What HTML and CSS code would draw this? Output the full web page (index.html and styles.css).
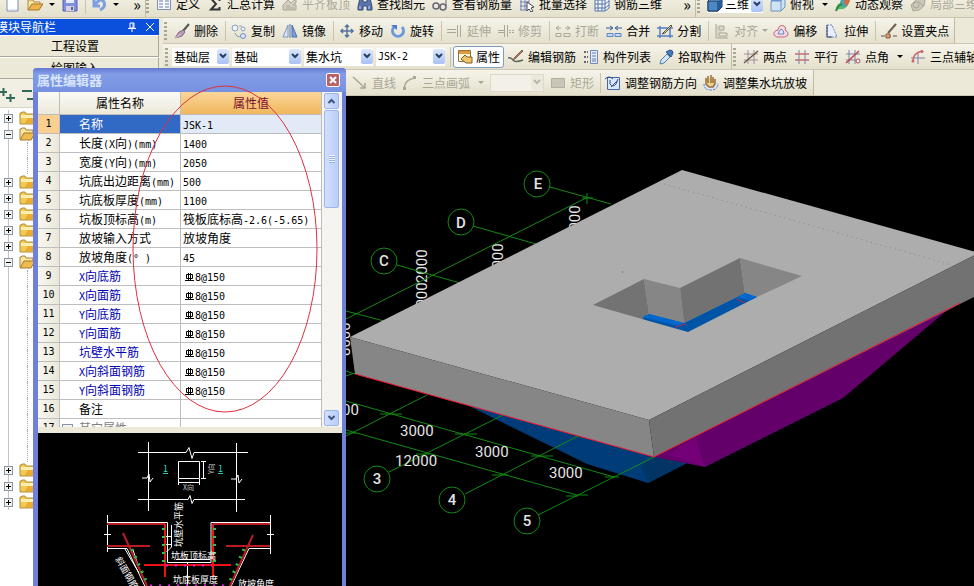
FILE: index.html
```html
<!DOCTYPE html>
<html lang="zh-CN">

<head>
    <meta charset="UTF-8">
    <meta name="viewport" content="width=device-width, initial-scale=1.0">
    <title>钢筋算量</title>
    <link rel="stylesheet" href="styles.css">
</head>

<body>
    <!-- shared symbols -->
    <svg class="symbols" aria-hidden="true">
        <symbol id="chevron" viewBox="0 0 12 14">
            <path d="M3 5l3 3 3-3" fill="none" stroke="currentColor" stroke-width="2" />
        </symbol>
        <symbol id="folder" viewBox="0 0 16 14">
            <path d="M1 3V2h1l1-1h3l1 2h8v10H1z" fill="#f2c94f" stroke="#b58c3c" />
            <path d="M2 4h12v3H2z" fill="#fff0b0" />
            <path d="M9 7h5v5H6z" fill="#eba937" />
        </symbol>
        <symbol id="folder-open" viewBox="0 0 16 14">
            <path d="M1 12V2h1l1-1h3l1 2h7v3" fill="#fbe69b" stroke="#a08040" />
            <path d="M1 13l4-7h11l-4 7z" fill="#f2b94b" stroke="#a07830" />
        </symbol>
        <symbol id="rebar" viewBox="0 0 10 10">
            <path d="M1.500 2.500h6v4h-6zM3.500 1v8M5.500 1v8M0 8.500h9" fill="none" stroke="#000" />
        </symbol>
    </svg>

    <div class="app">
        <header class="top-row">
            <div class="toolbar standard">
                <button aria-label="新建"><svg class="icon" viewBox="0 0 16 16"><path d="M3 1h8l3 3v11H3z" fill="#fff" stroke="#7d8db0" /><path d="M5 14h8" stroke="#c3cde6" /></svg></button>
                <button aria-label="打开"><svg class="icon" viewBox="0 0 16 16"><path d="M1 14V4h5l1 2h6v3" fill="#fbe69b" stroke="#b08a40" /><path d="M1 14l4-6h11l-4 6z" fill="#f0b34c" stroke="#a07830" /></svg><span class="arrow"></span></button>
                <button aria-label="保存"><svg class="icon" viewBox="0 0 16 16"><path d="M1 1h14v14H1z" fill="#7f8fdf" stroke="#5560a8" /><path d="M4 1h8v6H4z" fill="#e8ecff" /><path d="M4 10h8v5H4z" fill="#d8d0e0" /><path d="M9 11h2v3H9z" fill="#55609c" /></svg></button>
                <span class="sep"></span>
                <button aria-label="撤销"><svg class="icon" viewBox="0 0 16 16"><path d="M3 4v6h6M4 9q5-8 9-3 2 5-4 8" fill="none" stroke="#7f9ee0" stroke-width="3" /></svg><span class="arrow"></span></button>
                <span class="more">»</span>
            </div>
            <div class="toolbar tools">
                <span class="grip"></span>
                <button><svg class="icon" viewBox="0 0 16 16"><path d="M1.500 2.500h13v11h-13z" fill="#f8faff" stroke="#7d8fb5" /><path d="M3 5h4M3 8h4M3 11h4M9 5h4M9 8h4M9 11h4" stroke="#6577a8" /></svg>定义</button>
                <button><svg class="icon" viewBox="0 0 16 16"><path d="M12.500 5V2.500H4l5 5.500-5 5.500h8.500V11" fill="none" stroke="#333" stroke-width="2" /></svg>汇总计算</button>
                <button disabled><svg class="icon" viewBox="0 0 16 16"><path d="M1 14V9l5-5 3 3 5-4v4l-3 2h3v5zM4 10h4M4 12h8" fill="#d2cfc0" stroke="#aaa797" /></svg>平齐板顶</button>
                <button><svg class="icon" viewBox="0 0 16 16"><path d="M3 2h3v4h4V2h3l2 9v3h-5v-4H6v4H1v-3z" fill="#5876ac" stroke="#304a7c" /><path d="M3 10v3M12 10v3" stroke="#c5d4ee" /></svg>查找图元</button>
                <button><svg class="icon" viewBox="0 0 16 16"><circle cx="4" cy="10" r="3" fill="none" stroke="#667" stroke-width="1.500" /><circle cx="11" cy="11" r="3" fill="none" stroke="#667" stroke-width="1.500" /><path d="M7 10h2M14 10V3h-2" fill="none" stroke="#667" /></svg>查看钢筋量</button>
                <button><svg class="icon" viewBox="0 0 16 16"><path d="M1 2h9M1 6h9M1 10h8M1 14h8M2 1v13M6 1v13M10 1v6" stroke="#6f83bb" /><path d="M8 6l7 5-3 1 2 3-2 1-2-3-2 2z" fill="#fff" stroke="#445" /></svg>批量选择</button>
                <button><svg class="icon" viewBox="0 0 16 16"><path d="M1 4l4-3h10v11l-4 3H1zM1 4h10v11M11 4l4-3M1 8h10l4-3M1 12h10l4-3M4 4v11M8 4v11" fill="#f4f8ff" stroke="#5972ae" /></svg>钢筋三维</button>
                <span class="more">»</span>
            </div>
            <div class="toolbar view">
                <span class="grip"></span>
                <div class="combo combo-view">
                    <svg class="icon" viewBox="0 0 16 16"><path d="M1 5l4-4h10v10l-4 4H1z" fill="#9cc6ee" stroke="#1b3558" /><path d="M1 5h10v10H1z" fill="#4c88c8" stroke="#1b3558" /><path d="M11 5l4-4v10l-4 4z" fill="#285c98" /></svg>
                    <select aria-label="视图"><option>三维</option></select>
                    <span class="drop"><svg><use href="#chevron" /></svg></span>
                </div>
                <button><svg class="icon" viewBox="0 0 16 16"><path d="M1 5l4-4h10v10l-4 4H1z" fill="#cfe3f8" stroke="#6f92b8" /><path d="M1 5h10v10M11 5l4-4" fill="none" stroke="#6f92b8" /><path d="M3 2h10l-3 3H1z" fill="#5f96d0" /></svg>俯视<span class="arrow"></span></button>
                <button><svg class="icon" viewBox="0 0 16 16"><path d="M1 14q0-7 7-8l6-5q2 3-1 8-3 5-8 4z" fill="#5bb96c" /><circle cx="9" cy="7" r="4" fill="#4aa3a8" /><path d="M11 2l4 3-3 5-3-4z" fill="#e3643c" /><path d="M1 15q2-6 6-7" stroke="#2c8a4c" stroke-width="2" fill="none" /></svg>动态观察</button>
                <button disabled><svg class="icon" viewBox="0 0 16 16"><path d="M1 9l5-5 4-2 5 2-1 6-5 4-6 1z" fill="#cbc8b9" stroke="#aaa797" /><circle cx="6" cy="9" r="3" fill="none" stroke="#aaa797" /><path d="M8 5l5 5" stroke="#aaa797" /></svg>局部三维</button>
            </div>
        </header>

        <div class="workspace">
            <nav class="nav-panel">
                <div class="nav-title">
                    <span class="nav-name">模块导航栏</span>
                    <button aria-label="固定"><svg class="small-icon" viewBox="0 0 10 10"><path d="M3 1h4v5H3zM1 6.500h8M5 7v3M6 1v5" fill="none" stroke="#fff" /></svg></button>
                    <button aria-label="关闭"><svg class="small-icon" viewBox="0 0 10 10"><path d="M1 1l8 8M9 1l-8 8" stroke="#fff" /></svg></button>
                </div>
                <button class="nav-button">工程设置</button>
                <button class="nav-button">绘图输入</button>
                <div class="tree-tools">
                    <svg viewBox="0 0 36 16"><path d="M0 5h7M3.500 1v8M6 11h9M10.500 7v8M22 4h10M27 12h9" stroke="#2f6a5a" stroke-width="2" fill="none" /></svg>
                </div>
                <ul class="tree">
                    <li><span class="box plus"></span><svg><use href="#folder" /></svg></li>
                    <li><span class="box"></span><svg><use href="#folder-open" /></svg></li>
                    <li class="leaf"></li>
                    <li class="leaf"></li>
                    <li><span class="box plus"></span><svg><use href="#folder" /></svg></li>
                    <li><span class="box plus"></span><svg><use href="#folder" /></svg></li>
                    <li><span class="box plus"></span><svg><use href="#folder" /></svg></li>
                    <li><span class="box plus"></span><svg><use href="#folder" /></svg></li>
                    <li><span class="box plus"></span><svg><use href="#folder" /></svg></li>
                    <li><span class="box"></span><svg><use href="#folder-open" /></svg></li>
                    <li class="leaf"></li>
                    <li class="leaf"></li>
                    <li class="leaf"></li>
                    <li class="leaf"></li>
                    <li class="leaf"></li>
                    <li class="leaf"></li>
                    <li class="leaf"></li>
                    <li class="leaf"></li>
                    <li class="leaf"></li>
                    <li class="leaf"></li>
                    <li class="leaf"></li>
                    <li class="leaf"></li>
                    <li><span class="box plus"></span><svg><use href="#folder" /></svg></li>
                    <li><span class="box plus"></span><svg><use href="#folder" /></svg></li>
                    <li><span class="box plus"></span><svg><use href="#folder" /></svg></li>
                </ul>
            </nav>

            <main class="main">
                <div class="toolbar-row">
                    <div class="toolbar edit closed">
                        <span class="grip"></span>
                        <button><svg class="icon" viewBox="0 0 16 16"><path d="M15 1L9 8" stroke="#555" stroke-width="2" /><path d="M9 7l2 2-3 4-7 2 4-6z" fill="#b89ab4" stroke="#80688a" /><path d="M1 15l6-4" stroke="#e3cde0" /></svg>删除</button>
                        <span class="sep"></span>
                        <button><svg class="icon" viewBox="0 0 16 16"><circle cx="4" cy="5" r="3" fill="#eef4ff" stroke="#8b9cb8" /><circle cx="12" cy="6" r="2" fill="#eef4ff" stroke="#8b9cb8" /><circle cx="12" cy="13" r="2.500" fill="#dbe7fb" stroke="#6e8cc0" /><path d="M4 10q1 4 5 4M8 3h3" fill="none" stroke="#8b9cb8" /></svg>复制</button>
                        <button><svg class="icon" viewBox="0 0 16 16"><path d="M6 2v12H1z" fill="#dce9fb" stroke="#7a95c8" /><path d="M10 2v12h5z" fill="#7fa2dc" stroke="#4a6cab" /><path d="M8 1v14" stroke="#5577b5" /></svg>镜像</button>
                        <span class="sep"></span>
                        <button><svg class="icon" viewBox="0 0 16 16"><path d="M8 2v12M2 8h12M6 4l2-2 2 2M6 12l2 2 2-2M4 6L2 8l2 2M12 6l2 2-2 2" fill="none" stroke="#55739f" stroke-width="1.500" /></svg>移动</button>
                        <button><svg class="icon" viewBox="0 0 16 16"><path d="M4 4a5.500 5.500 0 1 0 8 0" fill="none" stroke="#6c98e0" stroke-width="3" /><path d="M1 2h6v5z" fill="#4a7ccc" /></svg>旋转</button>
                        <span class="sep"></span>
                        <button disabled><svg class="icon" viewBox="0 0 16 16"><path d="M0 6.500h9M0 9.500h9M10.500 2v12M13.500 2v12" fill="none" stroke="#aaa797" /></svg>延伸</button>
                        <button disabled><svg class="icon" viewBox="0 0 16 16"><path d="M0 7.500h6M0 9.500h6M6.500 2v12M9.500 2v12M11 7.500h2M14 7.500h2M11 9.500h2M14 9.500h2" fill="none" stroke="#aaa797" /></svg>修剪</button>
                        <span class="sep"></span>
                        <button disabled><svg class="icon" viewBox="0 0 16 16"><path d="M1 5h5M4 3L1 5l3 2M10 5h5M12 3l3 2-3 2M1 10.500h5v3H1zM9 10.500h6v3H9z" fill="none" stroke="#aaa797" /></svg>打断</button>
                        <button><svg class="icon" viewBox="0 0 16 16"><path d="M0 5h6M4 3l3 2-3 2M16 5h-6M12 3L9 5l3 2" fill="none" stroke="#335a9c" /><path d="M1 10.500h6v3H1zM9 10.500h6v3H9z" fill="#c4d7f6" stroke="#5e85c6" /></svg>合并</button>
                        <button><svg class="icon" viewBox="0 0 16 16"><path d="M0 5h16M0 13h16M3 3v12M13 3v12" stroke="#537fca" stroke-width="1.500" /><path d="M14 2L5 11l3-1 7-7z" fill="#e6d7a6" stroke="#554" /></svg>分割</button>
                        <span class="sep"></span>
                        <button disabled class="tight"><svg class="icon" viewBox="0 0 16 16"><path d="M2 1v14h12M5 3h5v4H5zM5 10h8v3H5z" fill="#dcd9ca" stroke="#aaa797" /></svg>对齐<span class="arrow"></span></button>
                        <button><svg class="icon" viewBox="0 0 16 16"><path d="M1 12q-1-4 4-5 1-6 6-4 3 2 1 4 4 2 3 5-3 3-7 2-5 1-7-2z" fill="#f6dce2" stroke="#c0687c" /><path d="M5 11q1-3 3-5 3 1 3 5z" fill="#dfe6fa" stroke="#6c82ba" /></svg>偏移</button>
                        <button><svg class="icon" viewBox="0 0 16 16"><path d="M3 2h5l5 12H3z" fill="#e8effb" stroke="#6b83b5" stroke-dasharray="2 1" /><path d="M3 2v12h5" fill="none" stroke="#2d3e6a" /></svg>拉伸</button>
                        <span class="sep"></span>
                        <button><svg class="icon" viewBox="0 0 16 16"><path d="M15 1L7 10" stroke="#6c6250" stroke-width="2" /><path d="M0 13h16" stroke="#555" stroke-dasharray="4 2" /><path d="M5 11h4v4H5z" fill="#d8a070" stroke="#8a5b38" /></svg>设置夹点</button>
                    </div>
                </div>

                <div class="toolbar-row">
                    <div class="toolbar component closed">
                        <span class="grip"></span>
                        <div class="combos">
                            <div class="combo combo-floor"><select aria-label="楼层"><option>基础层</option></select><span class="drop"><svg><use href="#chevron" /></svg></span></div>
                            <div class="combo"><select aria-label="构件类别"><option>基础</option></select><span class="drop"><svg><use href="#chevron" /></svg></span></div>
                            <div class="combo"><select aria-label="构件类型"><option>集水坑</option></select><span class="drop"><svg><use href="#chevron" /></svg></span></div>
                            <div class="combo"><select class="en" aria-label="构件"><option>JSK-2</option></select><span class="drop"><svg><use href="#chevron" /></svg></span></div>
                        </div>
                        <span class="sep"></span>
                        <button class="pressed"><svg class="icon" viewBox="0 0 16 16"><path d="M1.500 1.500h12v11h-12z" fill="#fff8e0" stroke="#8a7440" /><path d="M2 2h11v3H2z" fill="#e39a3c" /><path d="M4 10l4-4 2 2h5v6H9z" fill="#f0c46a" stroke="#7a5c28" /></svg>属性</button>
                        <button><svg class="icon" viewBox="0 0 16 16"><path d="M0 9q3-1 5 2t10 0" fill="none" stroke="#5b6a5a" stroke-width="1.500" /><path d="M15 2L8 9l-3 2 2-3 7-7z" fill="#b08870" stroke="#8a5c48" /></svg>编辑钢筋</button>
                        <button><svg class="icon" viewBox="0 0 16 16"><path d="M1 3h4M1 8h4M1 13h4" stroke="#667" stroke-width="2" stroke-dasharray="2 1" /><path d="M7.500 1.500h7v13h-7z" fill="#e4ecfc" stroke="#7289b5" /><path d="M9 4h4M9 7h4M9 10h4M9 12h4" stroke="#5f78ad" /></svg>构件列表</button>
                        <button><svg class="icon" viewBox="0 0 16 16"><path d="M2 15l1-4 6-6 3 3-6 6z" fill="#d4e4fa" stroke="#5a7cae" /><path d="M8 3l5 5 2-4q0-3-3-3z" fill="#4878bf" stroke="#2e558e" /></svg>拾取构件</button>
                    </div>
                    <div class="toolbar axis">
                        <span class="grip"></span>
                        <button><svg class="icon" viewBox="0 0 16 16"><path d="M5 1v14M11 1v14M1 5h14M1 11h14" stroke="#a08f98" /><path d="M1 14L15 2" stroke="#6b5a48" stroke-width="1.500" /></svg>两点</button>
                        <button><svg class="icon" viewBox="0 0 16 16"><path d="M5 1v14M11 1v14" stroke="#7b83a8" /><path d="M1 5h14M1 11h14" stroke="#c07078" stroke-width="1.500" /></svg>平行</button>
                        <button><svg class="icon" viewBox="0 0 16 16"><path d="M4 1v14M10 1v14M1 5h14M1 11h10" stroke="#7b83a8" /><path d="M1 14L14 2" stroke="#c0404c" stroke-width="1.500" /><circle cx="13" cy="12" r="2" fill="#fff" stroke="#c0404c" /></svg>点角<span class="arrow"></span></button>
                        <button><svg class="icon" viewBox="0 0 16 16"><path d="M8 3v12M1 9h14" stroke="#7b83a8" /><path d="M3 12q0-8 9-10" fill="none" stroke="#d0606c" stroke-width="1.500" /><circle cx="12" cy="2.500" r="1.500" fill="#d0606c" /><circle cx="3" cy="12" r="1.500" fill="#d0606c" /></svg>三点辅轴</button>
                    </div>
                </div>

                <div class="toolbar-row">
                    <div class="toolbar draw closed">
                        <button disabled><svg class="icon" viewBox="0 0 16 16"><path d="M1 2l12 11M13 8v5H8" fill="none" stroke="#aaa797" stroke-width="1.500" /></svg>直线</button>
                        <button disabled><svg class="icon" viewBox="0 0 16 16"><path d="M2 14Q3 4 13 3" fill="none" stroke="#aaa797" stroke-width="1.500" /><path d="M1 12h3v3H1zM11 1h3v3h-3z" fill="#aaa797" /></svg>三点画弧<span class="arrow"></span></button>
                        <div class="combo combo-off"><select aria-label="画法" disabled><option></option></select><span class="drop"><svg><use href="#chevron" /></svg></span></div>
                        <button disabled><svg class="icon" viewBox="0 0 16 16"><path d="M1.500 3.500h13v9h-13z" fill="#c9c6b8" stroke="#b3b0a2" /></svg>矩形</button>
                        <span class="sep"></span>
                        <button><svg class="icon" viewBox="0 0 16 16"><path d="M2.500 2.500h12v12h-12z" fill="#dbe8fa" stroke="#4868a8" /><path d="M0 4q4-4 8 0M5 5v4q3 4 6 0l2-5M6 12l6-6" fill="none" stroke="#2d518c" /></svg>调整钢筋方向</button>
                        <button><svg class="icon" viewBox="0 0 16 16"><path d="M1 9q0 6 7 6t7-7" fill="#dbe8fa" stroke="#5577bb" stroke-dasharray="2 1" /><path d="M3 3v6l3 3h4l2-3V4M5 1v7M8 0v8M10 2v6" fill="#f2cf8a" stroke="#94703c" stroke-width="1.500" /></svg>调整集水坑放坡</button>
                    </div>
                </div>

                <!-- 3D view -->
                <svg class="canvas" viewBox="163 96 811 490" preserveAspectRatio="xMinYMin slice">
                    <g class="axis-text">
                        <text transform="translate(580 239) rotate(-90)">2000</text>
                        <text transform="translate(503 277) rotate(-90)">2000</text>
                        <text transform="translate(427 283) rotate(-90)">2000</text>
                        <text transform="translate(427 316) rotate(-90)">2000</text>
                        <text transform="translate(350 356) rotate(-90)">8000</text>
                    </g>
                    <g class="axis-line">
                        <path d="M346 319L588 197M582 198h11M587 193v11" />
                        <path d="M550 187l61 17M473 226l63 18M397 265l63 18M346 311l38 10" />
                    </g>
                    <path d="M467 405l120 59 61 19 39-20-33-7z" fill="#003c78" />
                    <path d="M654 457l-13 9 7 17 39-20z" fill="#003566" />
                    <path d="M654 457l303-152-12 7-45 38-57 48-138 69z" fill="#64006a" />
                    <path d="M668 455l27-18 10 30z" fill="#740078" />
                    <path d="M682 170l297 83-330 167-299-83z" fill="#adadad" />
                    <path d="M350 337l299 83 5 37-299-83z" fill="#868686" />
                    <path d="M649 420l330-167-5 44-320 160z" fill="#727272" />
                    <path d="M355 374l299 83 306-154" fill="none" stroke="#f01830" />
                    <path d="M664 184l288 81" stroke="#858585" stroke-dasharray="1 4" />
                    <path d="M593 305l51-26 5 34-7 6z" fill="#737373" />
                    <path d="M644 279l36 9 4 35-35-9z" fill="#868686" />
                    <path d="M680 288l60-30 5 35-61 30z" fill="#727272" />
                    <path d="M740 258l62 18-45 21-12-4z" fill="#868686" />
                    <path d="M642 319l7-5 35 9 61-30 12 4-69 35z" fill="#0054a6" />
                    <path d="M642 317l7-3 35 9-5 3zM736 298l9-5 12 4-6 3z" fill="#0068cc" />
                    <path d="M675 327l11-3M736 299l9 4" stroke="#b02858" />
                    <path d="M622 272h1" stroke="#555" />
                    <g class="axis-line">
                        <path d="M346 401l268 76M346 430l231 65h11M346 436l81-41M346 376l9-3M346 371l9 3" />
                        <path d="M389 472l114-57M465 494l113-58M538 515l116-58" />
                        <path d="M380 414h22M455 434h22M531 456h22M605 477h14M343 433h13M416 454h14M492 475h16M566 496h12" />
                        <circle cx="537" cy="184" r="13" />
                        <circle cx="461" cy="222" r="13" />
                        <circle cx="384" cy="261" r="13" />
                        <circle cx="377" cy="479" r="13" />
                        <circle cx="452" cy="500" r="13" />
                        <circle cx="527" cy="521" r="13" />
                    </g>
                    <g class="axis-text">
                        <text x="342" y="415">00</text>
                        <text x="400" y="436">3000</text>
                        <text x="475" y="457">3000</text>
                        <text x="549" y="478">3000</text>
                        <text x="395" y="466">12000</text>
                    </g>
                    <g class="axis-label">
                        <text x="538" y="189">E</text>
                        <text x="461" y="228">D</text>
                        <text x="384" y="266">C</text>
                        <text x="377" y="484">3</text>
                        <text x="452" y="505">4</text>
                        <text x="527" y="526">5</text>
                    </g>
                </svg>
            </main>
        </div>

        <!-- property editor window -->
        <section class="property-window">
            <div class="window-title">
                <span>属性编辑器</span>
                <button aria-label="关闭"><svg class="small-icon" viewBox="0 0 10 10"><path d="M2 2l6 6M8 2L2 8" stroke="#fff" stroke-width="2" /></svg></button>
            </div>
            <div class="grid-view">
                <table>
                    <thead>
                        <tr><th class="num"></th><th class="name">属性名称</th><th class="value active">属性值</th></tr>
                    </thead>
                    <tbody>
                        <tr class="selected"><td>1</td><td>名称</td><td><span class="en">JSK-1</span></td></tr>
                        <tr><td>2</td><td>长度<span class="en">(X</span>向<span class="en">)(mm)</span></td><td><span class="en">1400</span></td></tr>
                        <tr><td>3</td><td>宽度<span class="en">(Y</span>向<span class="en">)(mm)</span></td><td><span class="en">2050</span></td></tr>
                        <tr><td>4</td><td>坑底出边距离<span class="en">(mm)</span></td><td><span class="en">500</span></td></tr>
                        <tr><td>5</td><td>坑底板厚度<span class="en">(mm)</span></td><td><span class="en">1100</span></td></tr>
                        <tr><td>6</td><td>坑板顶标高<span class="en">(m)</span></td><td>筏板底标高<span class="en">-2.6(-5.65)</span></td></tr>
                        <tr><td>7</td><td>放坡输入方式</td><td>放坡角度</td></tr>
                        <tr><td>8</td><td>放坡角度<span class="en">(° )</span></td><td><span class="en">45</span></td></tr>
                        <tr class="steel"><td>9</td><td><span class="en">X</span>向底筋</td><td><svg><use href="#rebar" /></svg><span class="en">8@150</span></td></tr>
                        <tr class="steel"><td>10</td><td><span class="en">X</span>向面筋</td><td><svg><use href="#rebar" /></svg><span class="en">8@150</span></td></tr>
                        <tr class="steel"><td>11</td><td><span class="en">Y</span>向底筋</td><td><svg><use href="#rebar" /></svg><span class="en">8@150</span></td></tr>
                        <tr class="steel"><td>12</td><td><span class="en">Y</span>向面筋</td><td><svg><use href="#rebar" /></svg><span class="en">8@150</span></td></tr>
                        <tr class="steel"><td>13</td><td>坑壁水平筋</td><td><svg><use href="#rebar" /></svg><span class="en">8@150</span></td></tr>
                        <tr class="steel"><td>14</td><td><span class="en">X</span>向斜面钢筋</td><td><svg><use href="#rebar" /></svg><span class="en">8@150</span></td></tr>
                        <tr class="steel"><td>15</td><td><span class="en">Y</span>向斜面钢筋</td><td><svg><use href="#rebar" /></svg><span class="en">8@150</span></td></tr>
                        <tr><td>16</td><td>备注</td><td></td></tr>
                        <tr class="group"><td>17</td><td><span class="box plus"></span>其它属性</td><td></td></tr>
                    </tbody>
                </table>
                <div class="scrollbar">
                    <span class="scroll-button up"><svg><use href="#chevron" /></svg></span>
                    <span class="thumb"></span>
                    <span class="scroll-button down"><svg><use href="#chevron" /></svg></span>
                </div>
            </div>

            <!-- section preview of the sump -->
            <svg class="preview" viewBox="38 433 304 153" preserveAspectRatio="xMinYMin slice">
                <g fill="none" stroke="#fff">
                    <path d="M148.500 442v69M236.500 443v69M138 452.500h48l3-5 3 11 2-6h54M138 499.500h50l2-4 2 8 2-4h51" />
                    <path d="M142 478h5l2-4 1 8 3-4M231 479h5l2-4 1 8 3-4" />
                    <path d="M178.500 461.500h21v17h-21zM178 482.500h22M178.500 479v6M199.500 479v6M203.500 461v17M201 461.500h5M201 478.500h5" />
                    <path d="M107.500 515v37M270.500 515v39M104 534.500h7M267 534.500h7" />
                    <path d="M107 522.500h60.500v40h43.500v-40h59.500M107 548.500h20l18 38M270 548.500h-21l-18 38" />
                    <path d="M187.500 562v24M176 559.500h34M171.500 525v22l-5 5M164 536.500h7M164 544.500h7M125 549l14 24M133 550l6 18" />
                </g>
                <g fill="none" stroke="#b81c20" stroke-width="2">
                    <path d="M107 524h58M270 524h-57M107 546h43M270 546h-44" />
                    <path d="M123 533l24 53M253 535l-23 51" />
                </g>
                <path d="M165 524v53M213 524v53M144 565h87" stroke="#f01018" stroke-width="2" />
                <g fill="none" stroke="#28c848" stroke-width="3" stroke-dasharray="2 6">
                    <path d="M163.500 528v34M214.500 528v34M132 549l15 34M244 549l-15 34" />
                </g>
                <path d="M166 565.500h46M150 585.500h78" stroke="#e020e0" stroke-width="2" stroke-dasharray="2 7" />
                <g class="preview-text">
                    <text transform="translate(182 547) rotate(-90)">坑壁水平筋</text>
                    <text x="171" y="559">坑板顶标高</text>
                    <text x="173" y="583">坑底板厚度</text>
                    <text x="238" y="587">放坡角度</text>
                    <text transform="translate(115 559) rotate(60)">斜面钢筋</text>
                </g>
                <g class="preview-dim">
                    <text x="183" y="490">X向</text>
                    <text transform="translate(214 474) rotate(-90)">Y向</text>
                </g>
                <g class="preview-mark">
                    <text x="163" y="472">1</text>
                    <text x="218" y="472">1</text>
                </g>
            </svg>
        </section>

        <svg class="markup" viewBox="0 0 190 330"><ellipse cx="95" cy="165" rx="92" ry="163" /></svg>
    </div>
</body>

</html>
```
FILE: styles.css
```css
* {
    box-sizing: border-box;
}

body {
    margin: 0;
    font-family: "Noto Sans CJK SC", "Liberation Sans", sans-serif;
    font-size: 12px;
    line-height: 16px;
    color: #000;
    background-color: #ece9d8;
}

button,
select {
    font: inherit;
    color: inherit;
    border: none;
    background: none;
    padding: 0;
    margin: 0;
}

.symbols {
    position: absolute;
    width: 0;
    height: 0;
}

.app {
    position: relative;
    display: flex;
    flex-direction: column;
    height: 100vh;
    overflow: hidden;
}

/* toolbars */
.top-row {
    display: flex;
    align-items: flex-end;
    height: 18px;
    flex: none;
    overflow: hidden;
    border-bottom: 1px solid #c9c5b2;
}

.toolbar-row {
    display: flex;
    flex: none;
    height: 26px;
    border-bottom: 1px solid #cbc7b4;
}

.toolbar {
    display: flex;
    align-items: center;
    gap: 7px;
    flex: none;
    height: 26px;
    background: linear-gradient(#f6f4ea, #ebe8d8 60%, #e4e0cc);
}

.toolbar-row .toolbar {
    height: 25px;
}

.toolbar.closed {
    border-right: 1px solid #bfbba6;
}

.toolbar button {
    display: flex;
    align-items: center;
    gap: 4px;
    flex: none;
    height: 22px;
    white-space: nowrap;
}

.toolbar button:disabled {
    color: #aaa797;
}

.icon {
    width: 16px;
    height: 16px;
    flex: none;
}

.small-icon {
    display: block;
    width: 10px;
    height: 10px;
}

.grip {
    width: 3px;
    height: 18px;
    flex: none;
    background: repeating-linear-gradient(#a8a593 0 2px, transparent 2px 4px);
}

.sep {
    width: 1px;
    height: 20px;
    flex: none;
    margin-right: -2px;
    background-color: #c8c4b0;
}

.arrow {
    margin-left: 4px;
    border: 3px solid transparent;
    border-top-color: currentColor;
    border-bottom: none;
}

.tight .arrow {
    margin-left: 0;
    margin-right: -2px;
}

.more {
    margin-left: auto;
    font-size: 16px;
}

.standard {
    width: 145px;
    padding: 0 4px;
}

.standard .arrow {
    margin-left: 2px;
}

.tools {
    width: 550px;
    padding-right: 4px;
    border-left: 1px solid #bfbba6;
}

.view {
    padding-left: 1px;
    border-left: 1px solid #bfbba6;
    flex: 1;
}

.edit {
    padding-left: 1px;
    padding-right: 5px;
}

.component {
    padding-left: 2px;
    padding-right: 5px;
}

.axis {
    flex: 1;
    padding-left: 1px;
}

.toolbar.draw {
    gap: 6px;
    padding-left: 189px;
    padding-right: 6px;
}

.combos {
    display: flex;
    gap: 3px;
    margin: 0 -2px 0 -3px;
}

.combo {
    display: flex;
    align-items: center;
    width: 69px;
    height: 18px;
    background-color: #fff;
}

.combo-floor {
    width: 57px;
}

.combo-view {
    width: 56px;
}

.combo-off {
    width: 54px;
    background-color: #f3f1e7;
    border: 1px solid #dcd9ca;
}

.combo select {
    flex: 1;
    min-width: 0;
    padding-left: 2px;
    appearance: none;
}

.drop {
    width: 12px;
    height: 15px;
    flex: none;
    color: #24405f;
    background: linear-gradient(#dce7fd, #a9c1f5);
    border-radius: 2px;
}

.drop svg {
    display: block;
    width: 12px;
    height: 14px;
}

.combo-off .drop {
    color: #b9b6a7;
    background: #ece9dc;
}

.toolbar .pressed {
    gap: 3px;
    padding: 0 3px;
    margin: 0 -3px;
    background-color: #fff;
    border: 1px solid #7d9cc0;
    border-radius: 3px;
}

/* latin part of mixed text, half the width of a chinese character */
.en,
.combo .en,
td:first-child {
    font-family: "DejaVu Sans Mono", monospace;
    font-size: 10px;
}

.en {
    line-height: 10px;
}

/* navigation */
.workspace {
    display: flex;
    flex: 1;
    min-height: 0;
}

.nav-panel {
    display: flex;
    flex-direction: column;
    width: 163px;
    flex: none;
    padding: 1px 4px 0 0;
}

.nav-title {
    display: flex;
    align-items: center;
    gap: 8px;
    height: 16px;
    padding-right: 4px;
    color: #fff;
    background-color: #0a50dc;
    overflow: hidden;
}

.nav-name {
    flex: 1;
    margin-left: -4px;
}

.nav-button {
    height: 22px;
    padding-right: 8px;
    border-top: 1px solid #fff;
    border-bottom: 1px solid #aca899;
    border-right: 1px solid #aca899;
    background-color: #ece9d8;
}

.tree-tools {
    height: 29px;
    padding-top: 8px;
    border-bottom: 1px solid #d8d4c4;
    background-color: #f1efe4;
}

.tree-tools svg {
    display: block;
    width: 36px;
    height: 16px;
}

.tree {
    flex: 1;
    margin: 0;
    padding: 2px 0 0 4px;
    list-style: none;
    background-color: #fff;
}

.tree li {
    display: flex;
    align-items: center;
    height: 16px;
    background: linear-gradient(90deg, transparent 4px, #c4c4c4 4px 5px, transparent 5px);
}

.tree li svg {
    width: 16px;
    height: 14px;
    margin-left: 6px;
}

.tree .leaf::after {
    content: "";
    width: 5px;
    height: 16px;
    margin-left: 23px;
    border-left: 1px dotted #aaa;
}

.box {
    width: 9px;
    height: 9px;
    flex: none;
    border: 1px solid #8496a8;
    background:
        linear-gradient(#000, #000) center / 5px 1px no-repeat,
        #f4f3ee;
}

.box.plus {
    background:
        linear-gradient(#000, #000) center / 5px 1px no-repeat,
        linear-gradient(#000, #000) center / 1px 5px no-repeat,
        #f4f3ee;
}

.main {
    display: flex;
    flex-direction: column;
    flex: 1;
    min-width: 0;
    overflow: hidden;
}

/* 3D view */
.canvas {
    display: block;
    flex: 1;
    width: 100%;
    min-height: 0;
    background-color: #000;
}

.axis-line {
    fill: none;
    stroke: #128a12;
}

.axis-text,
.axis-label {
    font-family: Roboto, "Liberation Sans", sans-serif;
    font-size: 15px;
    fill: #e4e4e4;
}

.axis-label {
    font-weight: 500;
    text-anchor: middle;
}

/* property editor */
.property-window {
    position: absolute;
    top: 68px;
    left: 33px;
    bottom: 0;
    display: flex;
    flex-direction: column;
    width: 313px;
    padding: 0 4px 0 5px;
    background-color: #6f80d8;
    border-radius: 4px 4px 0 0;
}

.window-title {
    display: flex;
    align-items: center;
    justify-content: space-between;
    flex: none;
    height: 24px;
    margin: 0 -4px 0 -5px;
    padding: 0 6px 0 4px;
    font-size: 13px;
    font-weight: bold;
    color: #d8e4fa;
    background: linear-gradient(#6678d2, #829de6 25%, #7691e0);
    border-radius: 4px 4px 0 0;
}

.window-title button {
    padding: 1px;
    border: 1px solid #fff;
    border-radius: 2px;
    background-color: #b8606c;
}

.grid-view {
    display: flex;
    flex: none;
    height: 341px;
    overflow: hidden;
    background-color: #fff;
    border-bottom: 6px solid #ece9d8;
}

table {
    flex: 1;
    table-layout: fixed;
    border-collapse: separate;
    border-spacing: 0;
    align-self: flex-start;
}

th,
td {
    height: 19px;
    padding: 0 0 0 2px;
    line-height: 18px;
    font-weight: normal;
    text-align: left;
    white-space: nowrap;
    border-right: 1px solid #bdbdbd;
    border-bottom: 1px solid #bdbdbd;
}

th {
    height: 23px;
    padding: 0;
    text-align: center;
    background: linear-gradient(#fbfaf5, #ece9da);
}

th.num {
    width: 22px;
}

th.name {
    width: 121px;
}

th.value {
    width: 141px;
}

th.active {
    color: #7a1030;
    background: linear-gradient(#fbd69a, #efb75c);
}

td:first-child {
    padding: 0;
    text-align: center;
    background: linear-gradient(90deg, #f8f7f0, #ebe8da);
}

td:nth-child(2) {
    padding-left: 19px;
}

.selected td:first-child {
    background: #fbcf90;
}

.selected td:nth-child(2) {
    color: #fff;
    background-color: #316ac5;
}

.selected td:nth-child(3) {
    background-color: #e2eaf8;
}

.steel td:nth-child(2) {
    color: #0000b4;
}

.steel td svg {
    width: 10px;
    height: 10px;
    margin: 0 0 0 2px;
    vertical-align: -1px;
}

.group td:nth-child(2) {
    padding-left: 2px;
    color: #808080;
}

.group .box {
    display: inline-block;
    width: 11px;
    height: 11px;
    margin-right: 6px;
    vertical-align: -2px;
}

.scrollbar {
    display: flex;
    flex-direction: column;
    width: 20px;
    padding: 1px 3px 1px 2px;
    background-color: #f5f4ee;
}

.scroll-button,
.thumb {
    border: 1px solid #9db5ea;
    border-radius: 2px;
    background: linear-gradient(90deg, #d3e0fd, #b9cdfa);
}

.scroll-button {
    height: 16px;
    flex: none;
    color: #3c5480;
}

.scroll-button svg {
    display: block;
    width: 13px;
    height: 14px;
}

.up svg {
    transform: rotate(180deg);
}

.down {
    margin-top: auto;
}

.thumb {
    display: flex;
    height: 98px;
    margin-top: 1px;
    align-items: center;
    justify-content: center;
}

.thumb::before {
    content: "";
    width: 6px;
    height: 8px;
    background: repeating-linear-gradient(#f2f6ff 0 1px, #96b0e8 1px 2px);
}

.preview {
    display: block;
    flex: 1;
    width: 100%;
    min-height: 0;
    background-color: #000;
}

.preview-text {
    font-size: 9px;
    fill: #fff;
}

.preview-dim {
    font-size: 7px;
    fill: #c8c8c8;
}

.preview-mark {
    font-size: 9px;
    fill: #30d8c8;
    text-decoration: underline;
}

/* hand-drawn mark over the value column */
.markup {
    position: absolute;
    top: 84px;
    left: 130px;
    width: 190px;
    height: 330px;
    pointer-events: none;
}

.markup ellipse {
    fill: none;
    stroke: #e03040;
}
```
